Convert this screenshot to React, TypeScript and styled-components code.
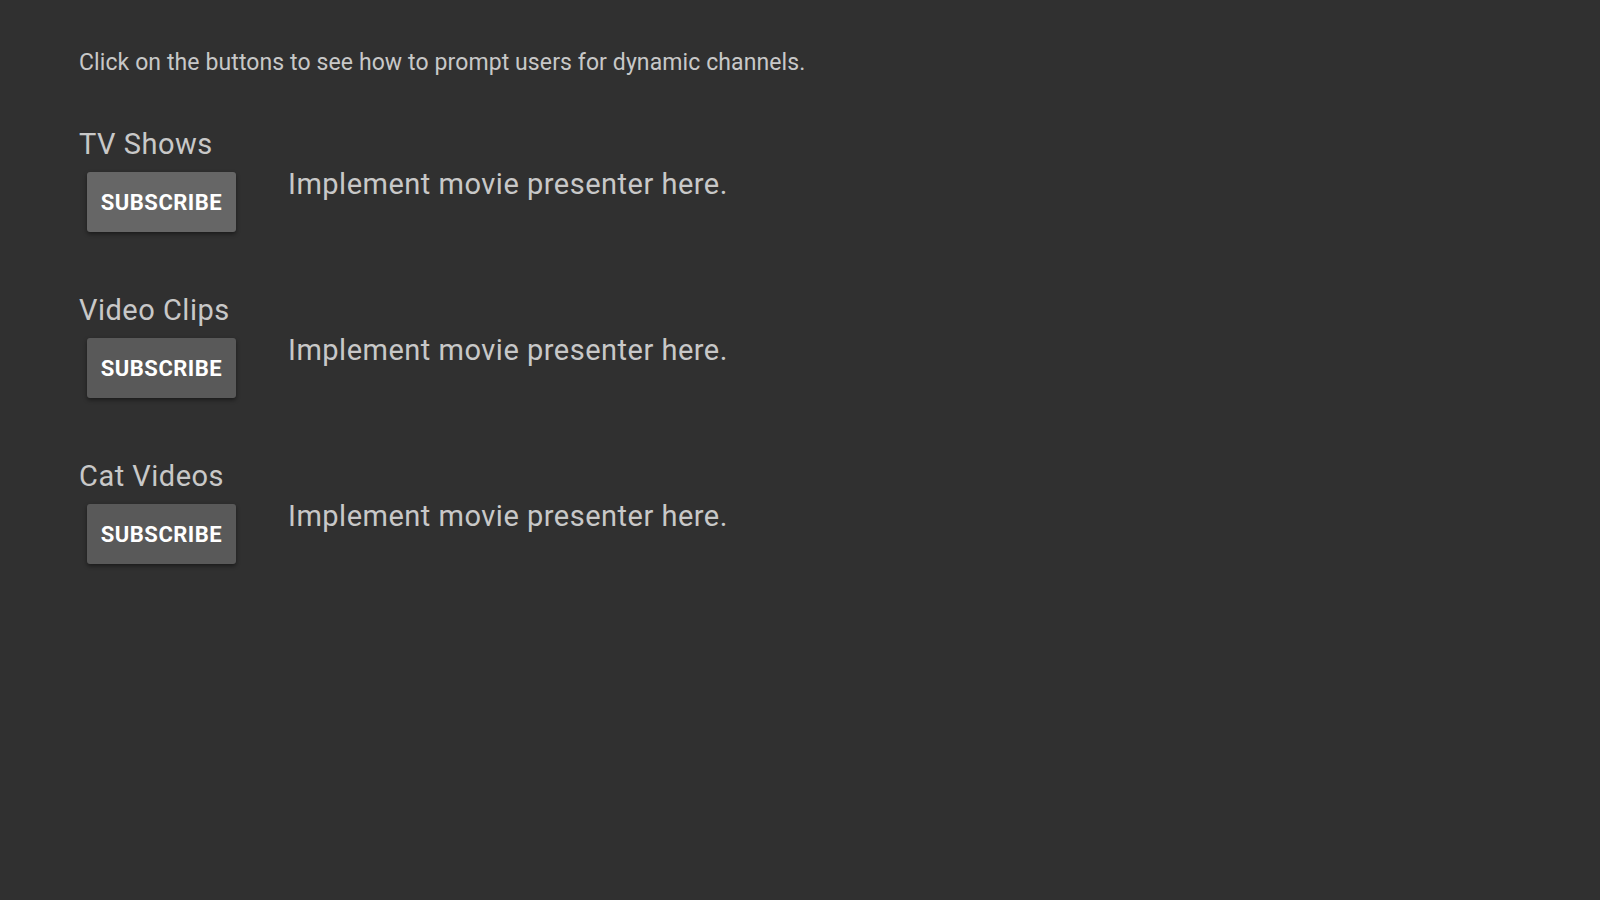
import { createGlobalStyle } from 'styled-components';
import styled from 'styled-components';

const GlobalStyle = createGlobalStyle`
  html, body {
    margin: 0;
    padding: 0;
    background: #303030;
  }
  body {
    font-family: Roboto, 'Liberation Sans', sans-serif;
  }
`;

const Page = styled.div`
  min-height: 100vh;
  box-sizing: border-box;
  background: #303030;
  padding: 50px 0 0 79px;
`;

const Intro = styled.p`
  margin: 0 0 52px;
  font-size: 23px;
  line-height: 26px;
  letter-spacing: 0.1px;
  color: #c8c8c8;
`;

const Sections = styled.div`
  display: flex;
  flex-direction: column;
  gap: 62px;
`;

const Section = styled.section`
  display: flex;
  flex-direction: column;
`;

const Label = styled.h2`
  margin: 0 0 12px;
  font-size: 29px;
  font-weight: 400;
  line-height: 32px;
  letter-spacing: 0.5px;
  color: #c8c8c8;
`;

const Row = styled.div`
  display: flex;
  align-items: flex-start;
`;

const SubscribeButton = styled.button<{ $focused?: boolean }>`
  margin-left: 8px;
  width: 149px;
  height: 60px;
  padding: 0;
  border: none;
  border-radius: 3px;
  background: ${({ $focused }) => ($focused ? '#666666' : '#595959')};
  color: #ffffff;
  font-family: Roboto, 'Liberation Sans', sans-serif;
  font-size: 22px;
  font-weight: 700;
  letter-spacing: 0.5px;
  box-shadow: 0 2px 4px rgba(0, 0, 0, 0.45);
  cursor: pointer;
`;

const Presenter = styled.div`
  margin: -4px 0 0 52px;
  font-size: 29px;
  line-height: 32px;
  letter-spacing: 0.5px;
  color: #c8c8c8;
`;

const channels = ['TV Shows', 'Video Clips', 'Cat Videos'];

export default function App() {
  return (
    <>
      <GlobalStyle />
      <Page>
        <Intro>Click on the buttons to see how to prompt users for dynamic channels.</Intro>
        <Sections>
          {channels.map((name, i) => (
            <Section key={name}>
              <Label>{name}</Label>
              <Row>
                <SubscribeButton $focused={i === 0}>SUBSCRIBE</SubscribeButton>
                <Presenter>Implement movie presenter here.</Presenter>
              </Row>
            </Section>
          ))}
        </Sections>
      </Page>
    </>
  );
}
